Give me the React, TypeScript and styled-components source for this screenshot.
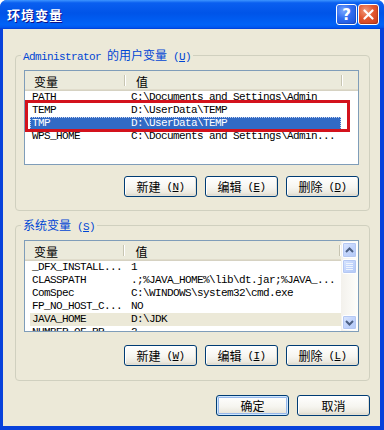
import styled, { createGlobalStyle } from 'styled-components';

const GlobalStyle = createGlobalStyle`
  html, body {
    margin: 0;
    padding: 0;
    background: #fff;
  }
  body {
    font-family: "Liberation Mono", "Noto Sans CJK SC", monospace;
    font-size: 11px;
    letter-spacing: -0.6px;
    color: #000;
  }
`;

const Window = styled.div`
  width: 384px;
  height: 430px;
  display: flex;
  flex-direction: column;
  border-radius: 7px 7px 0 0;
  overflow: hidden;
  background: #0842db;
`;

const TitleBar = styled.div`
  height: 29px;
  flex: none;
  display: flex;
  align-items: center;
  gap: 1px;
  padding: 0 5px 0 7px;
  background: linear-gradient(
    180deg,
    #3d95ff 0%,
    #0a5ff0 10%,
    #0054e8 45%,
    #0062f7 85%,
    #0058f0 94%,
    #003dd7 100%
  );
`;

const Title = styled.div`
  flex: 1;
  color: #fff;
  font: bold 13px "Noto Sans CJK SC", sans-serif;
  letter-spacing: 1px;
  text-shadow: 1px 1px 0 #0f1089;
`;

const CaptionButton = styled.div<{ $close?: boolean }>`
  width: 21px;
  height: 21px;
  box-sizing: border-box;
  border: 1px solid #fff;
  border-radius: 3px;
  display: flex;
  align-items: center;
  justify-content: center;
  color: #fff;
  font: bold 15px "DejaVu Sans", sans-serif;
  letter-spacing: 0;
  background: ${(p) =>
    p.$close
      ? 'radial-gradient(circle at 35% 30%, #f19b7c 0%, #e2572f 45%, #c4381a 100%)'
      : 'radial-gradient(circle at 35% 30%, #7aa7ff 0%, #2f6cf0 45%, #1a4fd6 100%)'};
  box-shadow: inset -1px -1px 0 rgba(0, 0, 0, 0.15);
`;

const Frame = styled.div`
  flex: 1;
  margin: 0 4px 4px 3px;
  background: #ece9d8;
  padding: 26px 10px 10px 12px;
  display: flex;
  flex-direction: column;
`;

const Group = styled.div<{ $gapTop?: number }>`
  position: relative;
  border: 1px solid #d0d0bf;
  border-radius: 4px;
  margin-top: ${(p) => p.$gapTop ?? 0}px;
  display: flex;
  flex-direction: column;
`;

const Legend = styled.div`
  position: absolute;
  top: -8px;
  left: 5px;
  padding: 0 2px;
  line-height: 14px;
  background: #ece9d8;
  color: #0046d5;
  white-space: nowrap;
`;

const GroupBody = styled.div<{ $top: number; $gap: number; $bottom: number }>`
  display: flex;
  flex-direction: column;
  gap: ${(p) => p.$gap}px;
  padding: ${(p) => p.$top}px 10px ${(p) => p.$bottom}px 8px;
`;

const Cjk = styled.span`
  font-family: "Noto Sans CJK SC", sans-serif;
  font-size: 12px;
  letter-spacing: 0;
`;

const Key = styled.span`
  text-decoration: underline;
`;

const List = styled.div<{ $h: number }>`
  position: relative;
  height: ${(p) => p.$h}px;
  box-sizing: border-box;
  border: 1px solid #7f9db9;
  background: #fff;
  display: flex;
  overflow: hidden;
`;

const ListMain = styled.div`
  flex: 1;
  display: flex;
  flex-direction: column;
  overflow: hidden;
`;

const Header = styled.div`
  height: 20px;
  flex: none;
  display: flex;
  background: #ebeadb;
  box-shadow: inset 0 -1px 0 #d6d2c2, inset 0 -2px 0 #e0dccb;
`;

const HeaderCell = styled.div<{ $w: number; $pad: number }>`
  position: relative;
  width: ${(p) => p.$w}px;
  box-sizing: border-box;
  padding-left: ${(p) => p.$pad}px;
  display: flex;
  align-items: center;
  &::after {
    content: '';
    position: absolute;
    right: 1px;
    top: 4px;
    bottom: 5px;
    width: 1px;
    background: #c7c5b2;
    box-shadow: 1px 0 0 #fff;
  }
`;

const Row = styled.div<{ $state?: 'active' | 'inactive' }>`
  height: 13px;
  line-height: 13px;
  flex: none;
  width: 311px;
  margin-left: 5px;
  display: flex;
  white-space: nowrap;
  box-sizing: border-box;
  background: ${(p) =>
    p.$state === 'active' ? '#316ac5' : p.$state === 'inactive' ? '#ece9d8' : 'transparent'};
  color: ${(p) => (p.$state === 'active' ? '#fff' : '#000')};
  outline: ${(p) => (p.$state === 'active' ? '1px dotted #c8d3ee' : 'none')};
  outline-offset: -1px;
`;

const NameCell = styled.div`
  width: 94px;
  padding-left: 2px;
  box-sizing: border-box;
  overflow: hidden;
`;

const ValueCell = styled.div`
  flex: 1;
  padding-left: 7px;
  overflow: hidden;
`;

const Marker = styled.div`
  position: absolute;
  left: 0;
  top: 29px;
  width: 325px;
  height: 32px;
  box-sizing: border-box;
  border: 3px solid #d3121c;
  pointer-events: none;
`;

const ScrollBar = styled.div`
  width: 17px;
  flex: none;
  box-sizing: border-box;
  padding: 1px 1px 1px 1px;
  display: flex;
  flex-direction: column;
  gap: 1px;
  background: linear-gradient(90deg, #f3f1ec, #fefefb);
`;

const ScrollPart = styled.div<{ $h: number }>`
  height: ${(p) => p.$h}px;
  flex: none;
  box-sizing: border-box;
  border: 1px solid #fff;
  border-radius: 2px;
  background: linear-gradient(135deg, #dde8fe 0%, #c2d4fc 50%, #b3c9f6 100%);
  box-shadow: 0 0 0 1px #b5c8f3 inset;
  display: flex;
  align-items: center;
  justify-content: center;
`;

const ScrollTrack = styled.div`
  flex: 1;
`;

const ButtonRow = styled.div`
  display: flex;
  justify-content: flex-end;
  gap: 8px;
`;

const Footer = styled(ButtonRow)`
  margin-top: 14px;
`;

const Btn = styled.div<{ $primary?: boolean }>`
  width: 73px;
  height: 21px;
  box-sizing: border-box;
  border: 1px solid #003c74;
  border-radius: 3px;
  background: linear-gradient(180deg, #ffffff 0%, #f6f5f0 55%, #ebe8de 85%, #d8d3c6 100%);
  box-shadow: ${(p) =>
    p.$primary
      ? 'inset 0 0 0 1px #cee7ff, inset 0 0 0 2px #98b8ea'
      : 'inset -1px -1px 0 #e3e0d5, inset 1px 1px 0 #fff'};
  display: flex;
  align-items: center;
  justify-content: center;
  white-space: pre;
`;

type Item = { name: string; value: string; state?: 'active' | 'inactive' };

const userVars: Item[] = [
  { name: 'PATH', value: 'C:\\Documents and Settings\\Admin' },
  { name: 'TEMP', value: 'D:\\UserData\\TEMP' },
  { name: 'TMP', value: 'D:\\UserData\\TEMP', state: 'active' },
  { name: 'WPS_HOME', value: 'C:\\Documents and Settings\\Admin...' },
];

const sysVars: Item[] = [
  { name: '_DFX_INSTALL...', value: '1' },
  { name: 'CLASSPATH', value: '.;%JAVA_HOME%\\lib\\dt.jar;%JAVA_...' },
  { name: 'ComSpec', value: 'C:\\WINDOWS\\system32\\cmd.exe' },
  { name: 'FP_NO_HOST_C...', value: 'NO' },
  { name: 'JAVA_HOME', value: 'D:\\JDK', state: 'inactive' },
  { name: 'NUMBER_OF_PR...', value: '2' },
];

function Chevron({ up }: { up?: boolean }) {
  return (
    <svg width="9" height="6" viewBox="0 0 9 6">
      <polyline
        points={up ? '1,5 4.5,1.5 8,5' : '1,1 4.5,4.5 8,1'}
        fill="none"
        stroke="#4d6185"
        strokeWidth="2"
      />
    </svg>
  );
}

function Grip() {
  return (
    <svg width="7" height="7" viewBox="0 0 7 7">
      {[0.5, 2.5, 4.5, 6.5].map((y) => (
        <line key={y} x1="0" y1={y} x2="7" y2={y} stroke={y % 2 > 1 ? '#8aa8e8' : '#eef4fe'} />
      ))}
    </svg>
  );
}

function VarList({ items, height, scroll, marked }: { items: Item[]; height: number; scroll?: boolean; marked?: boolean }) {
  return (
    <List $h={height}>
      <ListMain>
        <Header>
          <HeaderCell $w={101} $pad={9}>
            <Cjk>变量</Cjk>
          </HeaderCell>
          <HeaderCell $w={217} $pad={10}>
            <Cjk>值</Cjk>
          </HeaderCell>
        </Header>
        {items.map((it) => (
          <Row key={it.name} $state={it.state}>
            <NameCell>{it.name}</NameCell>
            <ValueCell>{it.value}</ValueCell>
          </Row>
        ))}
      </ListMain>
      {scroll && (
        <ScrollBar>
          <ScrollPart $h={16}>
            <Chevron up />
          </ScrollPart>
          <ScrollPart $h={15}>
            <Grip />
          </ScrollPart>
          <ScrollTrack />
          <ScrollPart $h={15}>
            <Chevron />
          </ScrollPart>
        </ScrollBar>
      )}
      {marked && <Marker />}
    </List>
  );
}

function ActionButtons({ keys }: { keys: [string, string, string] }) {
  const labels = ['新建', '编辑', '删除'];
  return (
    <ButtonRow>
      {labels.map((l, i) => (
        <Btn key={l}>
          <Cjk>{l}</Cjk> (<Key>{keys[i]}</Key>)
        </Btn>
      ))}
    </ButtonRow>
  );
}

export default function App() {
  return (
    <>
      <GlobalStyle />
      <Window>
        <TitleBar>
          <Title>环境变量</Title>
          <CaptionButton>?</CaptionButton>
          <CaptionButton $close>
            <svg width="11" height="11" viewBox="0 0 11 11">
              <path d="M1.5 1.5 L9.5 9.5 M9.5 1.5 L1.5 9.5" stroke="#fff" strokeWidth="2.2" strokeLinecap="round" />
            </svg>
          </CaptionButton>
        </TitleBar>
        <Frame>
          <Group>
            <Legend>
              Administrator <Cjk>的用户变量</Cjk> (<Key>U</Key>)
            </Legend>
            <GroupBody $top={14} $gap={11} $bottom={13}>
              <VarList items={userVars} height={95} marked />
              <ActionButtons keys={['N', 'E', 'D']} />
            </GroupBody>
          </Group>
          <Group $gapTop={14}>
            <Legend>
              <Cjk>系统变量</Cjk> (<Key>S</Key>)
            </Legend>
            <GroupBody $top={14} $gap={13} $bottom={14}>
              <VarList items={sysVars} height={92} scroll />
              <ActionButtons keys={['W', 'I', 'L']} />
            </GroupBody>
          </Group>
          <Footer>
            <Btn $primary>
              <Cjk>确定</Cjk>
            </Btn>
            <Btn>
              <Cjk>取消</Cjk>
            </Btn>
          </Footer>
        </Frame>
      </Window>
    </>
  );
}
